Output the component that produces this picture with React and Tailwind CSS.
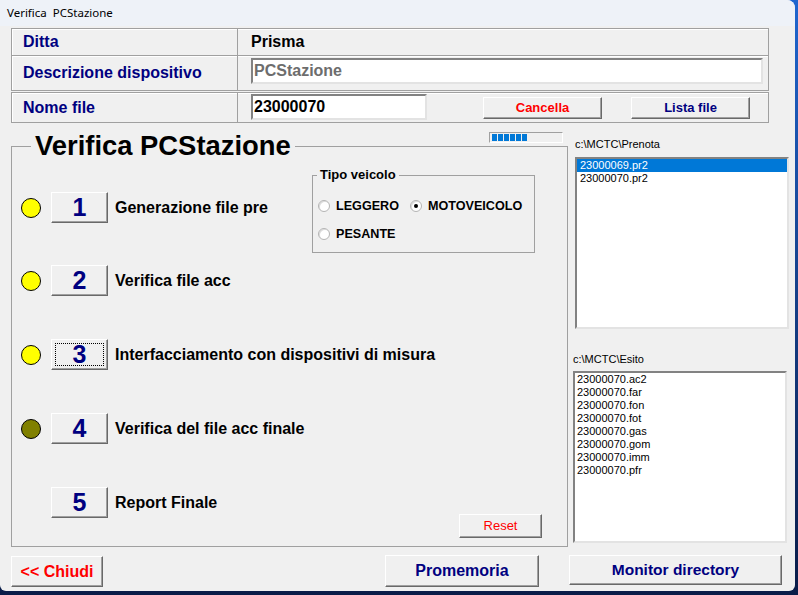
import React from 'react';

const Btn = ({ className = '', children, focus }) => (
  <button
    className={`flex items-center justify-center bg-[#f0f0f0] border border-t-white border-l-white border-r-[#696969] border-b-[#696969] shadow-[inset_-1px_-1px_0_#a0a0a0] p-[3px] ${className}`}
  >
    <span
      className={`flex items-center justify-center w-full h-full border border-dotted ${focus ? 'border-black' : 'border-transparent'}`}
    >
      {children}
    </span>
  </button>
);

const Led = ({ color }) =>
  color ? (
    <div className={`ml-[9px] w-[20px] h-[20px] rounded-full border border-black ${color}`} />
  ) : (
    <div className="ml-[9px] w-[20px] h-[20px]" />
  );

const Step = ({ led, num, label, focus, className = '' }) => (
  <div className={`flex items-center ${className}`}>
    <Led color={led} />
    <Btn focus={focus} className="ml-[10px] w-[57px] h-[31px] text-[25px] font-bold text-[#000080] leading-none">
      {num}
    </Btn>
    <span className="ml-[7px] text-[16px] font-bold text-black">{label}</span>
  </div>
);

const Radio = ({ checked, label, className = '' }) => (
  <label className={`flex items-center ${className}`}>
    <span className="flex items-center justify-center w-[12px] h-[12px] rounded-full bg-white border border-[#b4b4b4] shadow-[inset_1px_1px_0_#dcdcdc]">
      {checked && <span className="w-[4px] h-[4px] rounded-full bg-black" />}
    </span>
    <span className="ml-[6px] text-[12.6px] font-bold leading-[16px]">{label}</span>
  </label>
);

const sunken = 'bg-white border-2 border-t-[#828282] border-l-[#828282] border-b-[#e3e3e3] border-r-[#e3e3e3]';

export default function App() {
  const prenota = ['23000069.pr2', '23000070.pr2'];
  const esito = ['ac2', 'far', 'fon', 'fot', 'gas', 'gom', 'imm', 'pfr'].map((e) => `23000070.${e}`);

  return (
    <div className="w-[798px] h-[595px] overflow-hidden bg-gradient-to-b from-[#1f66cf] to-[#0a1c48]" style={{ fontFamily: '"Liberation Sans", Arial, sans-serif' }}>
      <div className="w-[795px] h-[591px] bg-[#f0f0f0] rounded-tr-[8px] rounded-br-[6px] rounded-bl-[6px] overflow-hidden">
        {/* barra del titolo */}
        <div
          className="h-[26px] bg-[#eef2f8] pl-[7px] flex items-center text-[11.5px] text-black whitespace-pre"
          style={{ fontFamily: '"Noto Sans", sans-serif' }}
        >
          Verifica  PCStazione
        </div>

        {/* intestazione */}
        <div className="mt-[2px] ml-[11px] w-[758px] text-[16px] font-bold">
          <div className="flex h-[28px] border border-[#a0a0a0] shadow-[inset_1px_1px_0_#fff]">
            <div className="w-[226px] border-r border-[#a0a0a0] pl-[11px] flex items-center text-[#000080]">Ditta</div>
            <div className="pl-[13px] flex items-center text-black">Prisma</div>
          </div>
          <div className="flex h-[36px] -mt-px border border-[#a0a0a0] shadow-[inset_1px_1px_0_#fff]">
            <div className="w-[226px] border-r border-[#a0a0a0] pl-[11px] flex items-center text-[#000080]">Descrizione dispositivo</div>
            <div className={`ml-[13px] mt-[2px] w-[512px] h-[26px] flex items-center pl-[1px] text-[#6d6d6d] ${sunken}`}>PCStazione</div>
          </div>
          <div className="flex items-start h-[31px] mt-[1px] border border-[#a0a0a0] shadow-[inset_1px_1px_0_#fff]">
            <div className="w-[226px] h-full border-r border-[#a0a0a0] pl-[11px] flex items-center text-[#000080]">Nome file</div>
            <div className={`ml-[13px] mt-[1px] w-[176px] h-[26px] flex items-center pl-[1px] text-black ${sunken}`}>23000070</div>
            <Btn className="ml-[56px] mt-[4px] w-[119px] h-[22px] text-[13px] font-bold text-[#ff0000]">Cancella</Btn>
            <Btn className="ml-[29px] mt-[4px] w-[119px] h-[22px] text-[13px] font-bold text-[#000080]">Lista file</Btn>
          </div>
        </div>

        {/* parte centrale */}
        <div className="flex h-[424px]">
          <div className="ml-[11px] w-[557px] flex flex-col">
            <div className="h-[23px] pt-[9px] pr-[5px] flex justify-end">
              <div className="w-[74px] h-[11px] border border-t-[#a0a0a0] border-l-[#a0a0a0] border-b-white border-r-white bg-[#f0f0f0] flex items-center gap-[1px] pl-[2px]">
                {[0, 1, 2, 3, 4, 5].map((i) => (
                  <div key={i} className="w-[5px] h-[7px] bg-[#0078d7]" />
                ))}
              </div>
            </div>
            <fieldset className="-mt-[14px] h-[415px] border border-[#a0a0a0]">
              <legend className="ml-[19px] px-[4px] text-[27.4px] leading-[28px] font-bold text-black">Verifica PCStazione</legend>

              <div className="flex items-start">
                <Step className="mt-[32px]" led="bg-[#ffff00]" num="1" label="Generazione file pre" />
                <fieldset className="ml-auto mr-[32px] mt-[7px] w-[223px] h-[86px] border border-[#a0a0a0]">
                  <legend className="ml-[4px] px-[3px] text-[13px] leading-[16px] font-bold">Tipo veicolo</legend>
                  <div className="mt-[15px] flex items-center pl-[5px]">
                    <Radio label="LEGGERO" />
                    <Radio className="ml-[11px]" checked label="MOTOVEICOLO" />
                  </div>
                  <div className="mt-[12px] flex items-center pl-[5px]">
                    <Radio label="PESANTE" />
                  </div>
                </fieldset>
              </div>

              <Step className="mt-[12px]" led="bg-[#ffff00]" num="2" label="Verifica file acc" />
              <Step className="mt-[43px]" led="bg-[#ffff00]" num="3" label="Interfacciamento con dispositivi di misura" focus />
              <Step className="mt-[43px]" led="bg-[#808000]" num="4" label="Verifica del file acc finale" />

              <div className="flex items-start mt-[43px]">
                <Step num="5" label="Report Finale" />
                <Btn className="ml-auto mr-[25px] mt-[27px] w-[83px] h-[24px] text-[13px] text-[#ff0000]">Reset</Btn>
              </div>
            </fieldset>
          </div>

          <div className="ml-[5px] w-[216px] flex flex-col text-[11px] leading-[13px] text-black">
            <div className="ml-[2px] mt-[15px]">c:\MCTC\Prenota</div>
            <div className={`ml-[2px] mt-[6px] w-[214px] h-[172px] ${sunken}`}>
              {prenota.map((f, i) => (
                <div key={f} className={`px-[3px] h-[13px] ${i === 0 ? 'bg-[#0078d7] text-white' : ''}`}>
                  {f}
                </div>
              ))}
            </div>
            <div className="mt-[24px]">c:\MCTC\Esito</div>
            <div className={`mt-[5px] w-[214px] h-[172px] ${sunken}`}>
              {esito.map((f) => (
                <div key={f} className="px-[2px] h-[13px]">
                  {f}
                </div>
              ))}
            </div>
          </div>
        </div>

        {/* pulsanti in basso */}
        <div className="flex items-start mt-[8px]">
          <Btn className="ml-[11px] mt-[1px] w-[92px] h-[31px] text-[16px] font-bold text-[#ff0000]">&lt;&lt; Chiudi</Btn>
          <Btn className="ml-[282px] w-[154px] h-[32px] text-[16px] font-bold text-[#000080]">Promemoria</Btn>
          <Btn className="ml-[30px] w-[213px] h-[30px] text-[15.5px] font-bold text-[#000080]">Monitor directory</Btn>
        </div>
      </div>
    </div>
  );
}
